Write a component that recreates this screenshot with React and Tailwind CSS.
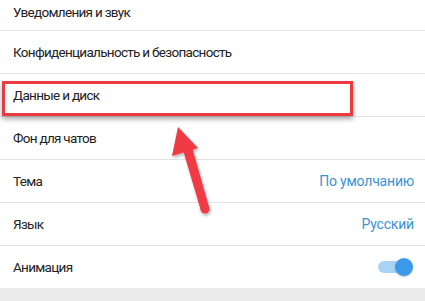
export default function App() {
  const font = { fontFamily: "Roboto, 'Noto Sans', sans-serif" };
  return (
    <div className="relative w-[425px] h-[301px] overflow-hidden bg-white" style={font}>
      <div className="flex flex-col">
        <div className="h-[31px] pb-[6px] flex items-center px-[13px] border-b border-[#e3e3e3] text-[13.5px] tracking-[-0.7px] text-[#222]">
          Уведомления и звук
        </div>
        <div className="h-[43px] flex items-center px-[13px] border-b border-[#e3e3e3] text-[13.5px] tracking-[-0.7px] text-[#222]">
          Конфиденциальность и безопасность
        </div>
        <div className="h-[43px] flex items-center px-[13px] border-b border-[#e3e3e3] text-[13.5px] tracking-[-0.7px] text-[#222]">
          Данные и диск
        </div>
        <div className="h-[43px] flex items-center px-[13px] border-b border-[#e3e3e3] text-[13.5px] tracking-[-0.7px] text-[#222]">
          Фон для чатов
        </div>
        <div className="h-[43px] flex items-center justify-between pl-[13px] pr-[11px] border-b border-[#e3e3e3] text-[13.5px] tracking-[-0.7px] text-[#222]">
          <span>Тема</span>
          <span className="text-[14px] tracking-[-0.2px] text-[#3a93d4]">По умолчанию</span>
        </div>
        <div className="h-[43px] flex items-center justify-between pl-[13px] pr-[11px] border-b border-[#e3e3e3] text-[13.5px] tracking-[-0.7px] text-[#222]">
          <span>Язык</span>
          <span className="text-[14px] tracking-[-0.2px] text-[#3a93d4]">Русский</span>
        </div>
        <div className="h-[42px] flex items-center justify-between pl-[13px] pr-[12px] text-[13.5px] tracking-[-0.7px] text-[#222]">
          <span>Анимация</span>
          <div className="relative w-[36px] h-[18px] flex items-center">
            <div className="ml-[1px] w-[32px] h-[12px] rounded-full bg-[#a9d3f5]" />
            <div className="absolute right-0 top-0 w-[18px] h-[18px] rounded-full bg-[#3b99ea] shadow-[0_1px_2px_rgba(0,0,0,0.25)]" />
          </div>
        </div>
        <div className="h-[20px] bg-[#ececec]" />
      </div>

      <div className="absolute left-[2px] top-[81px] w-[351px] h-[35px] border-[3px] border-[#ec3a40] shadow-[0_3px_5px_rgba(0,0,0,0.35)]" />

      <svg className="absolute left-0 top-0" width="425" height="301" viewBox="0 0 425 301">
        <defs>
          <filter id="sh" x="-50%" y="-50%" width="200%" height="200%">
            <feDropShadow dx="1" dy="2" stdDeviation="1.5" floodColor="#000" floodOpacity="0.3" />
          </filter>
        </defs>
        <g filter="url(#sh)" fill="#f03a44">
          <polygon points="178,127 172,156 198,148" />
          <polygon points="183,150 192,147 209,207 201,211" />
          <circle cx="205" cy="209" r="4.5" />
        </g>
      </svg>
    </div>
  );
}
